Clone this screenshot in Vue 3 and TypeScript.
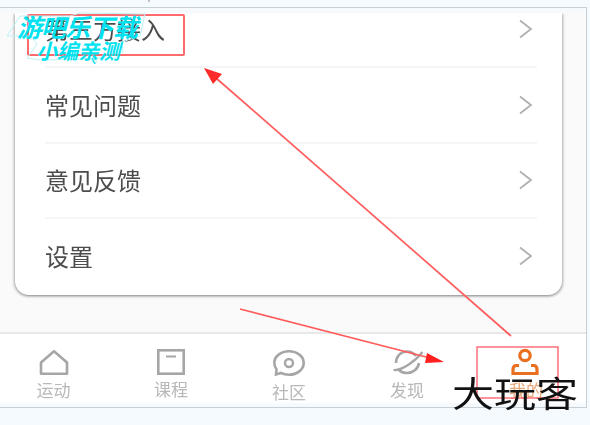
<template>
  <div class="page">
    <div class="frame">
      <main class="content">
        <section class="card">
          <div v-for="row in rows" :key="row" class="row">
            <span class="row-label">{{ row }}</span>
            <svg class="chevron" width="14" height="20" viewBox="0 0 14 20">
              <path d="M1 1.500l11 8.500-11 8.500" fill="none" stroke="#b0b0b0" stroke-width="1.8" />
            </svg>
          </div>
        </section>
      </main>
      <nav class="tabs">
        <div v-for="tab in tabs" :key="tab.label" :class="['tab', tab.cls, { active: tab.active }]">
          <svg class="tab-icon" width="36" height="32" viewBox="0 0 36 32" fill="none" :stroke="tab.active ? '#e8701f' : '#a6a6a6'" stroke-width="2.6">
            <template v-if="tab.icon === 'home'">
              <path d="M18 5.300L5 16.500v11.200h26V16.500z" stroke-linejoin="round" />
            </template>
            <template v-else-if="tab.icon === 'course'">
              <rect x="5.300" y="5.300" width="25.400" height="23.400" />
              <path d="M13 11.500h10" stroke-width="2" />
            </template>
            <template v-else-if="tab.icon === 'community'">
              <path d="M18 3.300c8 0 14.700 5 14.700 11.700S26 26.700 18 26.700c-3 0-5.500-.5-8-1.700l-5 1.500.5-5C4 19 3.300 17 3.300 15 3.300 8.300 10 3.300 18 3.300z" />
              <circle cx="18" cy="15" r="4" stroke-width="2.400" />
            </template>
            <template v-else-if="tab.icon === 'discover'">
              <path d="M7 17C7 10 12 5.500 18 5.500c4 0 7 2 9 4.500" />
              <path d="M30 17c-1 6-6 10-12 10-3.500 0-6-1-8-3" />
              <path d="M4.500 24c8 1 22-9 29-18" stroke-width="2.200" />
            </template>
            <template v-else>
              <circle cx="17" cy="9.500" r="5.200" stroke-width="3.200" />
              <path d="M11 19.500H8.500C6 19.500 5 21 5 23.500v4h24v-4c0-2.500-1-4-3.500-4H23" stroke-width="3.200" />
            </template>
          </svg>
          <span class="tab-label">{{ tab.label }}</span>
        </div>
      </nav>
    </div>

    <svg class="marks" width="590" height="425" viewBox="0 0 590 425" fill="none">
      <path d="M149 0v2" stroke="#8a8f94" />
      <rect x="28" y="15" width="156" height="40" rx="1" stroke="#ff6a6e" stroke-width="2" />
      <path d="M511 336L216 78" stroke="#ff5c5c" stroke-width="1.700" />
      <path d="M204 68l18 6-9 10z" fill="#ff2a2a" />
      <path d="M240 309L430 358" stroke="#ff5c5c" stroke-width="1.600" />
      <path d="M444 362l-17-9-2 10z" fill="#ff1f1f" />
      <rect x="477" y="347" width="81" height="51" stroke="#ff5a64" stroke-width="1.300" />
    </svg>

    <svg class="outline" width="160" height="70" viewBox="0 0 160 70" fill="none">
      <path d="M7 36L20 16h50l10-3 65 1-5 22-18 6 1 10-8 6H98l-3 6-5-5-50 1-13-2 10-14-7-8z" stroke="#bdf1f6" />
      <path d="M92 58l3 6" stroke="#18dfee" stroke-width="1.500" />
    </svg>
    <div class="stamp stamp-top">游吧乐下载</div>
    <div class="stamp stamp-sub">小编亲测</div>
    <div class="brand">大玩客</div>
  </div>
</template>

<script setup lang="ts">
const rows = ['第三方接入', '常见问题', '意见反馈', '设置']

const tabs = [
  { label: '运动', icon: 'home', cls: 'tab-a', active: false },
  { label: '课程', icon: 'course', cls: 'tab-b', active: false },
  { label: '社区', icon: 'community', cls: 'tab-c', active: false },
  { label: '发现', icon: 'discover', cls: 'tab-d', active: false },
  { label: '我的', icon: 'user', cls: 'tab-e', active: true }
]
</script>

<style>
html, body {
  margin: 0;
  background: #f5fafe;
}
</style>

<style scoped>
.page {
  position: relative;
  width: 590px;
  height: 425px;
  padding-top: 7px;
  box-sizing: border-box;
  overflow: hidden;
  background: #f5fafe;
  font-family: "Noto Sans CJK SC", "Liberation Sans", sans-serif;
}
.frame {
  display: flex;
  flex-direction: column;
  width: 587px;
  height: 401px;
  padding-top: 5px;
  box-sizing: border-box;
  border: 1px solid #c6d0d8;
  border-left: none;
  background: #f7fafc;
}
.content {
  flex: 1;
  min-height: 0;
  overflow: hidden;
  padding: 0 24px 0 15px;
  background: #fafafa;
  border-bottom: 2px solid #e8e8e8;
  filter: blur(0.5px);
}
.card {
  height: 282px;
  padding: 0 25px 0 30px;
  display: flex;
  flex-direction: column;
  justify-content: flex-end;
  background: #fff;
  border-radius: 0 0 14px 14px;
  box-shadow: -1px 1px 3px rgba(0, 0, 0, 0.28), 1px 1px 3px rgba(0, 0, 0, 0.28);
}
.row {
  flex: none;
  height: 75.5px;
  display: flex;
  align-items: center;
  justify-content: space-between;
  padding-right: 4px;
  border-bottom: 2px solid #f5f5f5;
  box-sizing: border-box;
  color: #4c4c4c;
}
.row:last-child {
  height: 76px;
  padding-bottom: 3px;
  border-bottom: none;
}
.row-label {
  font-size: 24px;
  line-height: 30px;
}
.tabs {
  flex: none;
  height: 73px;
  display: grid;
  grid-template-columns: 112px 118px 118px 118px 1fr;
  background: #fff;
  border-bottom: 4px solid #f6fafd;
  box-sizing: border-box;
  filter: blur(0.5px);
}
.tab {
  display: flex;
  flex-direction: column;
  align-items: center;
  padding-top: 12px;
  box-sizing: border-box;
  color: #b8b8b8;
}
.tab-a {
  padding-right: 5px;
}
.tab-b {
  padding-top: 11px;
}
.tab-c {
  padding-top: 14px;
}
.tab-icon {
  flex: none;
}
.tab-label {
  font-size: 17px;
  line-height: 20px;
  margin-top: 2px;
}
.active {
  color: #e9a878;
}
.marks,
.outline {
  position: absolute;
  left: 0;
  top: 0;
  pointer-events: none;
}
.marks {
  filter: blur(0.35px);
}
.stamp {
  position: absolute;
  color: #00e2f0;
  font-style: italic;
  font-weight: 700;
  white-space: nowrap;
}
.stamp-top {
  left: 17px;
  top: 10px;
  font-size: 25px;
  line-height: 32px;
  letter-spacing: -1px;
}
.stamp-sub {
  left: 36px;
  top: 36px;
  font-size: 21px;
  line-height: 28px;
}
.brand {
  position: absolute;
  left: 452px;
  top: 368px;
  color: #111;
  font-size: 42px;
  line-height: 48px;
  white-space: nowrap;
  transform: scaleY(0.85);
}
</style>
